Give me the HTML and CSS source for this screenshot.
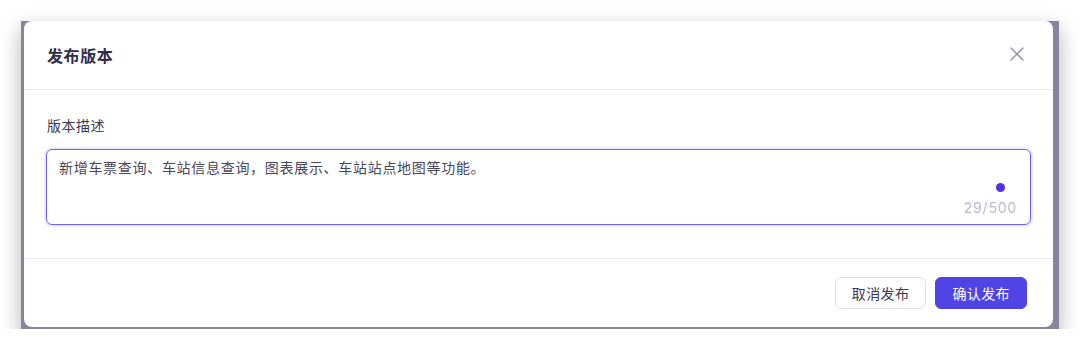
FILE: index.html
```html
<!DOCTYPE html>
<html lang="zh-cn">
<head>
<meta charset="UTF-8">
<meta name="viewport" content="width=device-width, initial-scale=1.0">
<title>发布版本</title>
<link rel="stylesheet" href="styles.css">
</head>
<body>
<div class="backdrop">
  <div class="modal">
    <div class="modal-header">
      <h2 class="modal-title">发布版本</h2>
      <button class="close-btn" aria-label="关闭">
        <svg width="14" height="14" viewBox="0 0 14 14">
          <path d="M1 1 L13 13 M13 1 L1 13" stroke="#8e8ca2" stroke-width="1.4" stroke-linecap="round" fill="none"/>
        </svg>
      </button>
    </div>

    <div class="modal-body">
      <div class="field-label">版本描述</div>
      <div class="field">
        <div class="field-text">新增车票查询、车站信息查询，图表展示、车站站点地图等功能。</div>
        <span class="dot"></span>
        <span class="counter">29/500</span>
      </div>
    </div>

    <div class="modal-footer">
      <button class="btn btn-default">取消发布</button>
      <button class="btn btn-primary">确认发布</button>
    </div>
  </div>
</div>
</body>
</html>
```

FILE: styles.css
```css
body {
  font-family: "Noto Sans CJK SC", "Noto Sans", sans-serif;
  background-color: #fff;
  margin: 0;
  padding: 0;
}

.backdrop {
  display: flex;
  width: 1038px;
  height: 308px;
  margin: 21px 0 0 21px;
  padding: 0 6px 2px 3px;
  box-sizing: border-box;
  background-color: #878599;
  box-shadow: 0 8px 20px rgba(0, 0, 0, 0.3);
}

.modal {
  flex: 1;
  display: flex;
  flex-direction: column;
  background-color: #fff;
  border-radius: 8px;
  overflow: hidden;
}

.modal-header {
  display: flex;
  align-items: center;
  justify-content: space-between;
  height: 68px;
  padding: 0 23px;
  border-bottom: 1px solid #e9e8f0;
}

.modal-title {
  margin: 0;
  font-size: 16px;
  letter-spacing: 0.6px;
  font-weight: 700;
  color: #302e4b;
}

.close-btn {
  display: flex;
  padding: 0;
  margin-right: 6px;
  margin-top: -3px;
  border: none;
  background: none;
}

.modal-body {
  padding: 25px 22px 33px 22px;
  border-bottom: 1px solid #e9e8f0;
}

.field-label {
  font-size: 14px;
  letter-spacing: 0.5px;
  line-height: 20px;
  color: #3b3953;
  margin-bottom: 14px;
  padding-left: 1px;
}

.field {
  position: relative;
  height: 76px;
  box-sizing: border-box;
  border: 1px solid #6f61f2;
  border-radius: 6px;
  box-shadow: 0 0 0 2px rgba(100, 84, 240, 0.12);
  padding: 7px 12px;
}

.field-text {
  font-size: 14px;
  letter-spacing: 0.7px;
  line-height: 20px;
  color: #48465c;
}

.dot {
  position: absolute;
  right: 25px;
  top: 33px;
  width: 9px;
  height: 9px;
  border-radius: 50%;
  background-color: #5130e6;
}

.counter {
  position: absolute;
  right: 13px;
  bottom: 6px;
  font-family: "Inter", "Noto Sans", sans-serif;
  font-size: 14px;
  letter-spacing: 0.8px;
  line-height: 20px;
  color: #bdbbca;
}

.modal-footer {
  display: flex;
  justify-content: flex-end;
  align-items: center;
  gap: 9px;
  height: 68px;
  padding: 0 26px;
}

.btn {
  height: 32px;
  padding: 0 16px;
  font-family: inherit;
  font-size: 14px;
  letter-spacing: 0.4px;
  border-radius: 6px;
  cursor: pointer;
}

.btn-default {
  background-color: #fff;
  border: 1px solid #dfdee8;
  color: #3b3953;
}

.btn-primary {
  background-color: #5044e6;
  border: 1px solid #5044e6;
  color: #fff;
}
```
